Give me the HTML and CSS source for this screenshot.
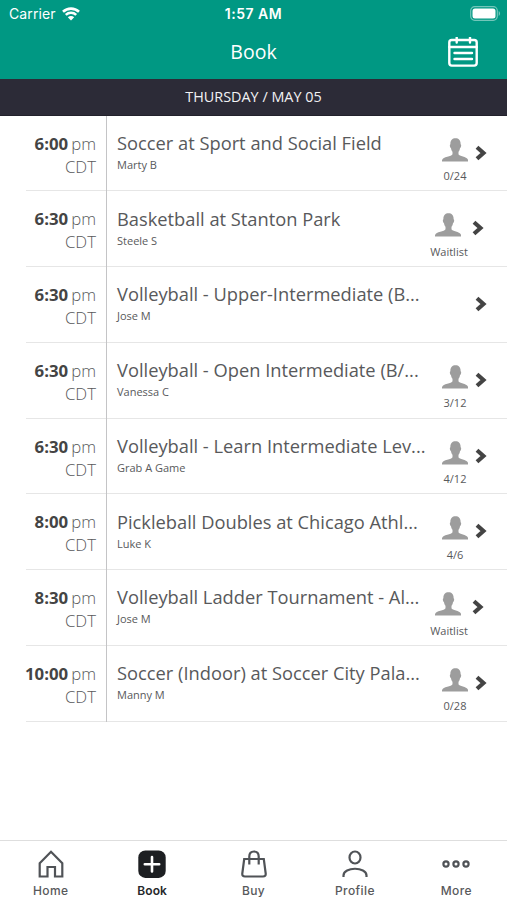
FILE: index.html
```html
<!doctype html>
<html lang="en">
  <head>
    <meta charset="UTF-8" />
    <meta name="viewport" content="width=device-width, initial-scale=1.0" />
    <title>Book</title>
    <link rel="stylesheet" href="styles.css">
  </head>
  <body>
    <!-- Shared icons -->
    <svg class="sprite" aria-hidden="true">
      <symbol id="person" viewBox="0 0 26 24">
        <path d="M13.500 .2C10.200 .2 8.200 2.300 8.400 6.300C7.400 6.500 7.800 9.800 9 10.200C9.300 12 9.900 13 10.500 13.800V16.200C9.800 18.600 .8 18.300 0 22.300V23.500H26.200V22.300C25.400 18.300 17.200 18.600 16.500 16.200V13.800C17.100 13 17.700 12 18 10.200C19.200 9.800 19.600 6.500 18.600 6.300C18.800 2.300 16.800 .2 13.500 .2Z" />
      </symbol>
      <symbol id="chevron" viewBox="0 0 12 16">
        <path d="M2 2.200L8.500 8L2 13.800" />
      </symbol>
    </svg>

    <div class="app">
      <header class="header">
        <div class="status-bar">
          <div class="carrier">
            <span>Carrier</span>
            <svg class="wifi" viewBox="0 0 18 14">
              <path d="M1 4.800C5.500 .5 12.500 .5 17 4.800M3.800 7.900C6.800 5.100 11.200 5.100 14.200 7.900" />
              <path class="wifi-dot" d="M5.800 10.300C7.600 8.600 10.400 8.600 12.200 10.300L9 13.500Z" />
            </svg>
          </div>
          <div class="clock">1:57 AM</div>
          <svg class="battery" viewBox="0 0 31 15">
            <rect class="battery-shell" x=".7" y=".7" width="26.600" height="13.600" rx="4" />
            <rect class="battery-fill" x="2.500" y="2.500" width="23" height="10" rx="2.500" />
            <path class="battery-tip" d="M28.700 5C30.500 5.800 30.500 9.200 28.700 10Z" />
          </svg>
        </div>
        <div class="title-bar">
          <h1>Book</h1>
          <svg class="calendar" viewBox="0 0 30 30">
            <rect x="1.300" y="3" width="27.400" height="25.600" rx="2.500" />
            <path d="M1.300 10H28.700M8.700 .5V5.500M22 .5V5.500M6.500 16H24M6.500 22H24" />
          </svg>
        </div>
      </header>

      <div class="date-bar">THURSDAY / MAY 05</div>

      <main class="schedule">
        <div class="row">
          <div class="time"><div><b>6:00</b>pm</div><div>CDT</div></div>
          <div class="info"><h2>Soccer at Sport and Social Field</h2><p>Marty B</p></div>
          <div class="spots"><svg class="person"><use href="#person" /></svg><span>0/24</span></div>
          <svg class="chevron"><use href="#chevron" /></svg>
        </div>
        <div class="row waitlist">
          <div class="time"><div><b>6:30</b>pm</div><div>CDT</div></div>
          <div class="info"><h2>Basketball at Stanton Park</h2><p>Steele S</p></div>
          <div class="spots"><svg class="person"><use href="#person" /></svg><span>Waitlist</span></div>
          <svg class="chevron"><use href="#chevron" /></svg>
        </div>
        <div class="row">
          <div class="time"><div><b>6:30</b>pm</div><div>CDT</div></div>
          <div class="info"><h2>Volleyball - Upper-Intermediate (B...</h2><p>Jose M</p></div>
          <svg class="chevron"><use href="#chevron" /></svg>
        </div>
        <div class="row">
          <div class="time"><div><b>6:30</b>pm</div><div>CDT</div></div>
          <div class="info"><h2>Volleyball - Open Intermediate (B/...</h2><p>Vanessa C</p></div>
          <div class="spots"><svg class="person"><use href="#person" /></svg><span>3/12</span></div>
          <svg class="chevron"><use href="#chevron" /></svg>
        </div>
        <div class="row">
          <div class="time"><div><b>6:30</b>pm</div><div>CDT</div></div>
          <div class="info"><h2>Volleyball - Learn Intermediate Lev...</h2><p>Grab A Game</p></div>
          <div class="spots"><svg class="person"><use href="#person" /></svg><span>4/12</span></div>
          <svg class="chevron"><use href="#chevron" /></svg>
        </div>
        <div class="row">
          <div class="time"><div><b>8:00</b>pm</div><div>CDT</div></div>
          <div class="info"><h2>Pickleball Doubles at Chicago Athl...</h2><p>Luke K</p></div>
          <div class="spots"><svg class="person"><use href="#person" /></svg><span>4/6</span></div>
          <svg class="chevron"><use href="#chevron" /></svg>
        </div>
        <div class="row waitlist">
          <div class="time"><div><b>8:30</b>pm</div><div>CDT</div></div>
          <div class="info"><h2>Volleyball Ladder Tournament - Al...</h2><p>Jose M</p></div>
          <div class="spots"><svg class="person"><use href="#person" /></svg><span>Waitlist</span></div>
          <svg class="chevron"><use href="#chevron" /></svg>
        </div>
        <div class="row">
          <div class="time"><div><b>10:00</b>pm</div><div>CDT</div></div>
          <div class="info"><h2>Soccer (Indoor) at Soccer City Pala...</h2><p>Manny M</p></div>
          <div class="spots"><svg class="person"><use href="#person" /></svg><span>0/28</span></div>
          <svg class="chevron"><use href="#chevron" /></svg>
        </div>
      </main>

      <nav class="tabs">
        <a class="tab">
          <svg viewBox="0 0 28 28"><path d="M2.700 13.200L14 1.800L25.300 13.200V26.500H18V17H10.500V26.500H2.700Z" /></svg>
          <span>Home</span>
        </a>
        <a class="tab active">
          <svg viewBox="0 0 28 28"><rect class="tile" x=".3" y=".5" width="27.400" height="27.400" rx="7" /><path class="plus" d="M14 7V21.400M6.800 14.200H21.200" /></svg>
          <span>Book</span>
        </a>
        <a class="tab">
          <svg viewBox="0 0 28 28"><path d="M4.200 9H23.800L25.700 23.500Q26 26.500 23 26.500H5Q2 26.500 2.300 23.500ZM9.300 14.500V6.500Q9.300 1.500 14 1.500T18.700 6.500V14.500" /></svg>
          <span>Buy</span>
        </a>
        <a class="tab">
          <svg viewBox="0 0 28 28"><ellipse cx="14" cy="7.500" rx="5.500" ry="6" /><path d="M2.500 27V25.500C2.500 16.500 25.500 16.500 25.500 25.500V27" /></svg>
          <span>Profile</span>
        </a>
        <a class="tab">
          <svg viewBox="0 0 28 28"><circle cx="4" cy="14" r="2.600" /><circle cx="14" cy="14" r="2.600" /><circle cx="24" cy="14" r="2.600" /></svg>
          <span>More</span>
        </a>
      </nav>
    </div>
  </body>
</html>
```
FILE: styles.css
```css
* {
  box-sizing: border-box;
}

body {
  margin: 0;
  background: #fff;
  color: #58595b;
  font-family: 'Open Sans', 'Noto Sans', sans-serif;
}

h1, h2, p {
  margin: 0;
  font-weight: 400;
}

svg {
  display: block;
  flex-shrink: 0;
}

.sprite {
  display: none;
}

.app {
  display: flex;
  flex-direction: column;
  height: 900px;
  overflow: hidden;
}

/* Header */
.header {
  height: 79px;
  background: #009883;
  color: #fff;
}

.status-bar {
  display: grid;
  grid-template-columns: 1fr auto 1fr;
  align-items: center;
  height: 27px;
  padding: 0 6px 0 9px;
  font: 14px/27px Inter, sans-serif;
}

.carrier {
  display: flex;
  align-items: center;
  gap: 6px;
  letter-spacing: 0.1px;
}

.wifi {
  width: 18px;
  height: 14px;
  fill: none;
  stroke: #fff;
  stroke-width: 2.6;
}

.wifi .wifi-dot {
  fill: #fff;
  stroke: none;
}

.clock {
  padding-right: 3px;
  font-weight: 600;
  letter-spacing: 0.5px;
}

.battery {
  justify-self: end;
  width: 31px;
  height: 15px;
}

.battery-shell {
  fill: none;
  stroke: #73c6ba;
  stroke-width: 1.2;
}

.battery-fill {
  fill: #fff;
}

.battery-tip {
  fill: #73c6ba;
}

.title-bar {
  display: grid;
  grid-template-columns: 1fr auto 1fr;
  align-items: center;
  height: 50px;
  padding: 0 29px;
}

.title-bar h1 {
  grid-column: 2;
  font-size: 19.5px;
  line-height: 50px;
}

.calendar {
  justify-self: end;
  width: 30px;
  height: 30px;
  fill: none;
  stroke: #fff;
  stroke-width: 2.4;
  stroke-linecap: round;
}

.date-bar {
  height: 36.5px;
  background: #2c2b37;
  border-bottom: 1px solid #22212b;
  color: #f2f2f4;
  font-size: 14.4px;
  line-height: 36px;
  text-align: center;
}

/* Class list */
.schedule {
  flex: 1;
}

.row {
  display: flex;
  height: 75.75px;
  margin-left: 26px;
  padding-right: 20px;
  border-bottom: 1px solid #e6e6e6;
}

.time {
  display: flex;
  flex-direction: column;
  flex: none;
  align-items: flex-end;
  width: 81px;
  height: 75.75px;
  padding: 16px 10px 0 0;
  border-right: 1px solid #c4c4c6;
  font-size: 16.8px;
  font-weight: 300;
  line-height: 23px;
  white-space: nowrap;
}

.time b {
  margin-right: 3px;
  color: #444;
  font-weight: 700;
}

.info {
  flex: 1;
  min-width: 0;
  padding: 14.4px 0 0 10px;
  white-space: nowrap;
}

.info h2 {
  font-size: 18.3px;
  line-height: 26px;
}

.info p {
  font-size: 11px;
  line-height: 18px;
}

.spots {
  display: flex;
  flex-direction: column;
  align-items: center;
  width: 28px;
  padding-top: 22px;
  font-size: 11px;
  line-height: 14px;
  white-space: nowrap;
}

.person {
  width: 26px;
  height: 24px;
  margin-bottom: 7.5px;
  fill: #9d9d9d;
}

.chevron {
  width: 12px;
  height: 16px;
  margin: 29px 0 0 6px;
  fill: none;
  stroke: #444;
  stroke-width: 4.1;
}

.waitlist {
  padding-right: 23px;
}

.waitlist .spots {
  width: 38px;
}

.waitlist .person {
  margin-right: 2px;
}

.waitlist .chevron {
  margin-left: 4px;
}

/* Bottom tabs */
.tabs {
  display: flex;
  height: 60px;
  border-top: 1px solid #dedede;
}

.tab {
  display: flex;
  flex: 1;
  flex-direction: column;
  align-items: center;
  padding-top: 8.5px;
  font: 500 12px/15px Inter, sans-serif;
  letter-spacing: 0.4px;
}

.tab svg {
  width: 28px;
  height: 28px;
  margin-bottom: 5.5px;
  fill: none;
  stroke: #505357;
  stroke-width: 2.2;
}

.tab.active {
  color: #26282b;
  font-weight: 600;
  letter-spacing: 0.1px;
}

.tab .tile {
  fill: #1d1f22;
  stroke: none;
}

.tab .plus {
  stroke: #fff;
  stroke-width: 2.6;
  stroke-linecap: round;
}
```
